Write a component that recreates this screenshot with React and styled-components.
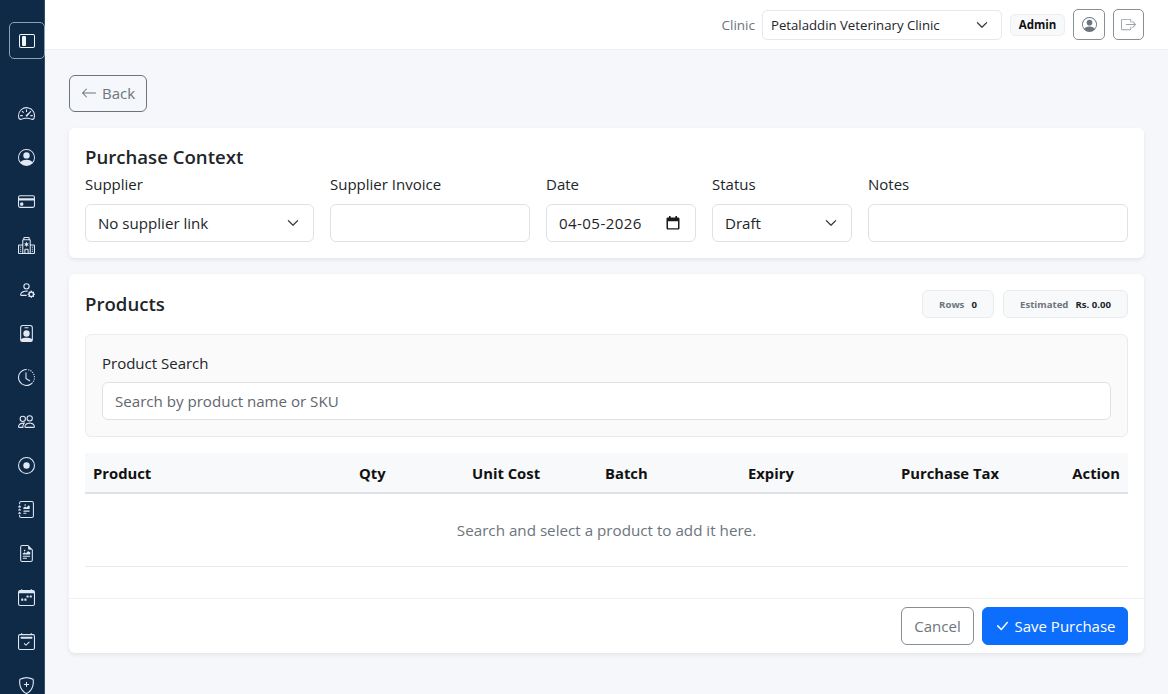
import React from "react";
import styled, { createGlobalStyle } from "styled-components";
import {
  BsLayoutSidebarInset, BsSpeedometer2, BsPersonCircle, BsCreditCard, BsHospital, BsPersonGear, BsPersonBadge,
  BsClockHistory, BsPeople, BsRecordCircle, BsJournalRichtext, BsFileEarmarkRichtext, BsCalendarWeek, BsCalendar2Check,
  BsShieldPlus, BsBoxArrowRight, BsArrowLeft, BsCheckLg, BsChevronDown,
} from "react-icons/bs";

const FONT = `"Open Sans", "Noto Sans", "Liberation Sans", sans-serif`;

const Global = createGlobalStyle`
  html, body { margin: 0; padding: 0; height: 100%; overflow: hidden; }
  body { background: #f5f7fb; font-family: ${FONT}; color: #212529; }
  * { box-sizing: border-box; }
`;

const Shell = styled.div`
  display: flex;
  width: 1168px;
  height: 694px;
  overflow: hidden;
`;

const Sidebar = styled.nav`
  width: 45px;
  flex: none;
  background: #0f2a47;
  display: flex;
  flex-direction: column;
  align-items: flex-start;
  padding: 22px 0 0 4px;
  border-right: 1px solid #33506b;
`;

const ToggleButton = styled.button`
  width: 36px;
  height: 37px;
  margin-left: 5px;
  flex: none;
  padding: 0;
  display: flex;
  align-items: center;
  justify-content: center;
  background: transparent;
  color: #f2f5fa;
  font-size: 16px;
  border: 1px solid #8ea0b3;
  border-radius: 5px;
  margin-bottom: 32px;
`;

const NavItem = styled.a`
  width: 44px;
  height: 44px;
  flex: none;
  display: flex;
  align-items: center;
  justify-content: center;
  color: #e3e7f2;
  font-size: 17px;
`;

const Main = styled.div`
  flex: 1;
  min-width: 0;
  display: flex;
  flex-direction: column;
`;

const Topbar = styled.header`
  height: 50px;
  flex: none;
  background: #fff;
  border-bottom: 1px solid #eef0f4;
  display: flex;
  align-items: center;
  justify-content: flex-end;
  padding: 0 24px 0 0;
`;

const ClinicLabel = styled.span`
  font-size: 13.5px;
  color: #6c757d;
  margin-right: 7px;
`;

const ClinicSelect = styled.div`
  width: 240px;
  height: 30px;
  background: #fff;
  border: 1px solid #e6e8ec;
  border-radius: 5px;
  display: flex;
  align-items: center;
  justify-content: space-between;
  padding: 0 13px 0 8px;
  font-size: 13.2px;
  color: #212529;
  margin-right: 8px;
`;

const RoleBadge = styled.span`
  height: 22px;
  width: 55px;
  background: #f8f9fa;
  border: 1px solid #eceef1;
  border-radius: 5px;
  display: flex;
  align-items: center;
  justify-content: center;
  font-size: 11.5px;
  font-weight: 700;
  color: #111;
  margin-right: 8px;
`;

const TopIconButton = styled.button`
  width: ${(p) => p.$w}px;
  height: 31px;
  padding: 0;
  background: #fff;
  border: 1px solid #868e96;
  border-radius: 5px;
  display: flex;
  align-items: center;
  justify-content: center;
  color: ${(p) => p.$color || "#6c757d"};
  font-size: 15px;
  margin-left: ${(p) => p.$ml || 0}px;
`;

const Content = styled.main`
  flex: 1;
  padding: 25px 24px 0;
  display: flex;
  flex-direction: column;
  align-items: stretch;
`;

const BackButton = styled.button`
  align-self: flex-start;
  width: 78px;
  height: 37px;
  margin-bottom: 16px;
  padding: 0 0 2px;
  background: transparent;
  border: 1px solid #6c757d;
  border-radius: 6px;
  color: #6c757d;
  font-family: ${FONT};
  font-size: 15px;
  display: flex;
  align-items: center;
  justify-content: center;
  gap: 5px;
`;

const Card = styled.section`
  background: #fff;
  border-radius: 6px;
  box-shadow: 0 2px 4px rgba(0, 0, 0, 0.075);
  margin-bottom: 16px;
  padding: ${(p) => p.$padding};
`;

const CardBody = styled.div`
  padding: 16px 16px 0;
`;

const CardTitle = styled.h2`
  margin: 0;
  font-size: 18.6px;
  line-height: 24px;
  font-weight: 600;
  color: #212529;
`;

const ContextForm = styled.div`
  display: grid;
  grid-template-columns: 229px 200px 150px 140px 260px;
  column-gap: 16px;
  margin-top: 3px;
`;

const Field = styled.div`
  display: flex;
  flex-direction: column;
`;

const Label = styled.label`
  font-size: 15px;
  line-height: 24px;
  color: #212529;
  margin-bottom: ${(p) => p.$gap || 8}px;
  display: block;
`;

const Control = styled.div`
  height: 38px;
  background: #fff;
  border: 1px solid #dee2e6;
  border-radius: 6px;
  display: flex;
  align-items: center;
  justify-content: space-between;
  padding: 0 14px 0 12px;
  font-size: 15.1px;
  color: ${(p) => (p.$muted ? "#5f666d" : "#212529")};
`;

const DateValue = styled.span`
  letter-spacing: 0.4px;
`;

const ProductsHead = styled.div`
  display: flex;
  align-items: center;
  justify-content: space-between;
  height: 28px;
  margin-bottom: 16px;
`;

const Chips = styled.div`
  display: flex;
  gap: 9px;
`;

const Chip = styled.div`
  height: 28px;
  width: ${(p) => p.$w}px;
  background: #f8f9fa;
  border: 1px solid #e9ecef;
  border-radius: 6px;
  display: flex;
  align-items: center;
  justify-content: center;
  gap: 7px;
  font-size: 9.6px;
  font-weight: 700;
`;

const ChipKey = styled.span`
  color: #6c757d;
`;

const ChipValue = styled.span`
  color: #212529;
`;

const SearchPanel = styled.div`
  background: #fafafb;
  border: 1px solid #e9ecef;
  border-radius: 6px;
  padding: 16px;
  height: 103px;
  margin-bottom: 16px;
`;

const Table = styled.table`
  width: 100%;
  table-layout: fixed;
  border-collapse: collapse;
`;

const Th = styled.th`
  width: ${(p) => p.$w}px;
  height: 40px;
  padding: 0 8px;
  background: #f8f9fa;
  border-bottom: 2px solid #dee2e6;
  text-align: ${(p) => p.$align || "left"};
  font-size: 14.8px;
  font-weight: 700;
  color: #111;
`;

const EmptyCell = styled.td`
  height: 73px;
  text-align: center;
  font-size: 15.2px;
  color: #6c757d;
  border-bottom: 1px solid #e9ecef;
`;

const Footer = styled.div`
  margin-top: 31px;
  padding: 0 16px;
  border-top: 1px solid #eef0f2;
  height: 55px;
  display: flex;
  align-items: center;
  justify-content: flex-end;
  gap: 8px;
`;

const CancelButton = styled.button`
  width: 73px;
  height: 38px;
  padding: 0;
  background: #fff;
  border: 1px solid #868e96;
  border-radius: 6px;
  color: #6c757d;
  font-family: ${FONT};
  font-size: 15px;
`;

const SaveButton = styled.button`
  width: 146px;
  height: 38px;
  padding: 0;
  background: #0d6efd;
  border: 1px solid #0d6efd;
  border-radius: 6px;
  color: #fff;
  font-family: ${FONT};
  font-size: 15px;
  display: flex;
  align-items: center;
  justify-content: center;
  gap: 4px;
`;

const CalendarGlyph = () => (
  <svg width="16" height="16" viewBox="0 0 16 16" aria-hidden="true">
    <path fill="#1a1a1a" d="M4 1h1.6v1.5h4.8V1H12v1.5h1.2c.7 0 1.3.6 1.3 1.3v9.4c0 .7-.6 1.3-1.3 1.3H2.8c-.7 0-1.3-.6-1.3-1.3V3.8c0-.7.6-1.3 1.3-1.3H4V1zM3 6.2v7h10v-7H3z" />
  </svg>
);

const navIcons = [
  BsSpeedometer2, BsPersonCircle, BsCreditCard, BsHospital, BsPersonGear, BsPersonBadge, BsClockHistory,
  BsPeople, BsRecordCircle, BsJournalRichtext, BsFileEarmarkRichtext, BsCalendarWeek, BsCalendar2Check, BsShieldPlus,
];

const columns = [
  ["Product", 266], ["Qty", 113], ["Unit Cost", 133], ["Batch", 143], ["Expiry", 153], ["Purchase Tax", 170], ["Action", 65, "right"],
];

export default function App() {
  return (
    <Shell>
      <Global />
      <Sidebar>
        <ToggleButton aria-label="Toggle sidebar"><BsLayoutSidebarInset /></ToggleButton>
        {navIcons.map((Icon, i) => (
          <NavItem key={i}><Icon /></NavItem>
        ))}
      </Sidebar>
      <Main>
        <Topbar>
          <ClinicLabel>Clinic</ClinicLabel>
          <ClinicSelect>Petaladdin Veterinary Clinic <BsChevronDown size={12} strokeWidth={0.8} /></ClinicSelect>
          <RoleBadge>Admin</RoleBadge>
          <TopIconButton $w={32}><BsPersonCircle /></TopIconButton>
          <TopIconButton $w={31} $ml={8} $color="#9aa1a8"><BsBoxArrowRight /></TopIconButton>
        </Topbar>
        <Content>
          <BackButton><BsArrowLeft size={16} /> Back</BackButton>
          <Card $padding="17px 16px 16px">
            <CardTitle>Purchase Context</CardTitle>
            <ContextForm>
              <Field>
                <Label>Supplier</Label>
                <Control>No supplier link <BsChevronDown size={12} strokeWidth={0.8} /></Control>
              </Field>
              <Field>
                <Label>Supplier Invoice</Label>
                <Control />
              </Field>
              <Field>
                <Label>Date</Label>
                <Control><DateValue>04-05-2026</DateValue> <CalendarGlyph /></Control>
              </Field>
              <Field>
                <Label>Status</Label>
                <Control>Draft <BsChevronDown size={12} strokeWidth={0.8} /></Control>
              </Field>
              <Field>
                <Label>Notes</Label>
                <Control />
              </Field>
            </ContextForm>
          </Card>
          <Card $padding="0">
            <CardBody>
              <ProductsHead>
                <CardTitle>Products</CardTitle>
                <Chips>
                  <Chip $w={72}><ChipKey>Rows</ChipKey><ChipValue>0</ChipValue></Chip>
                  <Chip $w={125}><ChipKey>Estimated</ChipKey><ChipValue>Rs. 0.00</ChipValue></Chip>
                </Chips>
              </ProductsHead>
              <SearchPanel>
                <Label $gap={7}>Product Search</Label>
                <Control $muted>Search by product name or SKU</Control>
              </SearchPanel>
              <Table>
                <thead>
                  <tr>
                    {columns.map(([name, w, align]) => (
                      <Th key={name} $w={w} $align={align}>{name}</Th>
                    ))}
                  </tr>
                </thead>
                <tbody>
                  <tr><EmptyCell colSpan={7}>Search and select a product to add it here.</EmptyCell></tr>
                </tbody>
              </Table>
            </CardBody>
            <Footer>
              <CancelButton>Cancel</CancelButton>
              <SaveButton><BsCheckLg size={16} /> Save Purchase</SaveButton>
            </Footer>
          </Card>
        </Content>
      </Main>
    </Shell>
  );
}
